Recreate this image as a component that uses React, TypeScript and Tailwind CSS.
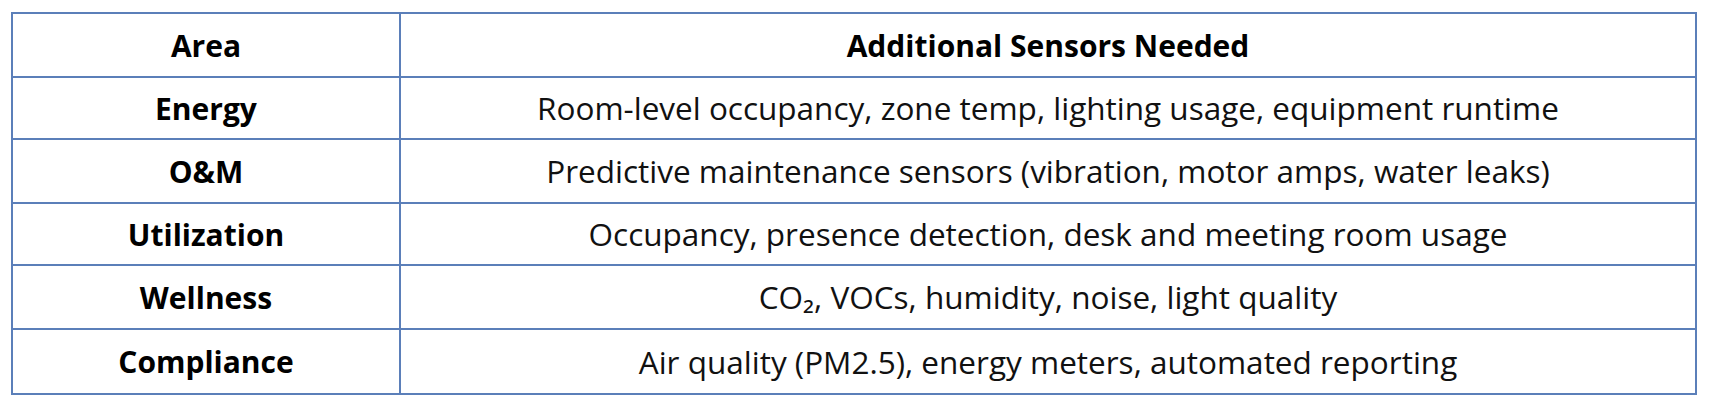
const rows: Array<{ area: string; sensors: string }> = [
  { area: 'Energy', sensors: 'Room-level occupancy, zone temp, lighting usage, equipment runtime' },
  { area: 'O&M', sensors: 'Predictive maintenance sensors (vibration, motor amps, water leaks)' },
  { area: 'Utilization', sensors: 'Occupancy, presence detection, desk and meeting room usage' },
  { area: 'Wellness', sensors: 'CO₂, VOCs, humidity, noise, light quality' },
  { area: 'Compliance', sensors: 'Air quality (PM2.5), energy meters, automated reporting' },
];

const heights = ['h-[62px]', 'h-[64px]', 'h-[62px]', 'h-[64px]', 'h-[65px]'];

export default function App() {
  return (
    <div className="w-[1710px] h-[410px] bg-white pl-[11px] pt-[12px] font-['Open_Sans','Liberation_Sans',sans-serif] text-black">
      <table className="w-[1686px] border-collapse border-2 border-[#5b7fb9] table-fixed">
        <colgroup>
          <col className="w-[388px]" />
          <col />
        </colgroup>
        <thead>
          <tr className="h-[64px]">
            <th className="border-2 border-[#5b7fb9] text-[30px] font-bold">Area</th>
            <th className="border-2 border-[#5b7fb9] text-[30px] font-bold">Additional Sensors Needed</th>
          </tr>
        </thead>
        <tbody>
          {rows.map((r, i) => (
            <tr key={r.area} className={heights[i]}>
              <td className="border-2 border-[#5b7fb9] text-center text-[30px] font-bold">{r.area}</td>
              <td className="border-2 border-[#5b7fb9] text-center text-[31.5px] text-[#111]">{r.sensors}</td>
            </tr>
          ))}
        </tbody>
      </table>
    </div>
  );
}
